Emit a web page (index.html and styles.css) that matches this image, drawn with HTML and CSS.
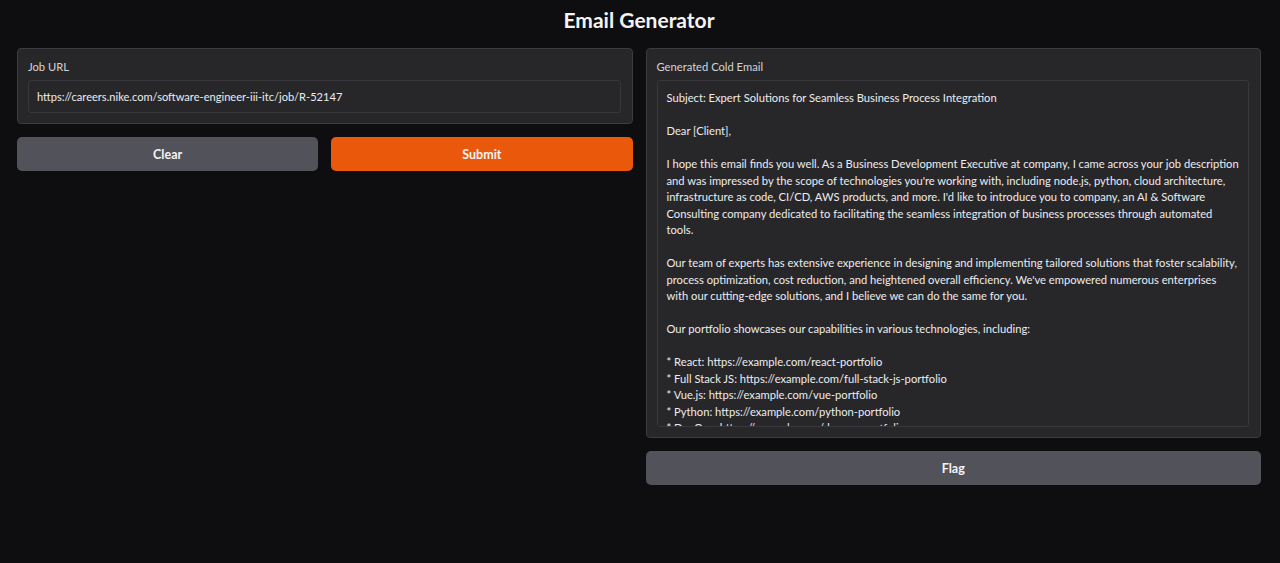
FILE: index.html
```html
<!DOCTYPE html>
<html lang="en">
<head>
<meta charset="utf-8">
<title>Email Generator</title>
<link rel="stylesheet" href="styles.css">
</head>
<body>
<main class="app">
  <h1 class="title">Email Generator</h1>
  <div class="columns">
    <section class="col">
      <div class="block">
        <label class="label">Job URL</label>
        <div class="input">https://careers.nike.com/software-engineer-iii-itc/job/R-52147</div>
      </div>
      <div class="btn-row">
        <button class="btn secondary">Clear</button>
        <button class="btn primary">Submit</button>
      </div>
    </section>
    <section class="col">
      <div class="block">
        <label class="label">Generated Cold Email</label>
        <div class="textarea">
          <div class="line">Subject: Expert Solutions for Seamless Business Process Integration</div>
          <div class="line blank"></div>
          <div class="line">Dear [Client],</div>
          <div class="line blank"></div>
          <div class="line">I hope this email finds you well. As a Business Development Executive at company, I came across your job description</div>
          <div class="line">and was impressed by the scope of technologies you're working with, including node.js, python, cloud architecture,</div>
          <div class="line">infrastructure as code, CI/CD, AWS products, and more. I'd like to introduce you to company, an AI &amp; Software</div>
          <div class="line">Consulting company dedicated to facilitating the seamless integration of business processes through automated</div>
          <div class="line">tools.</div>
          <div class="line blank"></div>
          <div class="line">Our team of experts has extensive experience in designing and implementing tailored solutions that foster scalability,</div>
          <div class="line">process optimization, cost reduction, and heightened overall efficiency. We've empowered numerous enterprises</div>
          <div class="line">with our cutting-edge solutions, and I believe we can do the same for you.</div>
          <div class="line blank"></div>
          <div class="line">Our portfolio showcases our capabilities in various technologies, including:</div>
          <div class="line blank"></div>
          <div class="line">* React: https://example.com/react-portfolio</div>
          <div class="line">* Full Stack JS: https://example.com/full-stack-js-portfolio</div>
          <div class="line">* Vue.js: https://example.com/vue-portfolio</div>
          <div class="line">* Python: https://example.com/python-portfolio</div>
          <div class="line">* DevOps: https://example.com/devops-portfolio</div>
        </div>
      </div>
      <button class="btn secondary full">Flag</button>
    </section>
  </div>
</main>
</body>
</html>
```

FILE: styles.css
```css
* { box-sizing: border-box; }
html, body {
  margin: 0;
  padding: 0;
  background: #0e0e10;
  color: #e4e4e7;
  font-family: "Source Sans Pro", Lato, "Noto Sans", sans-serif;
}
.app {
  padding: 0 19px 0 17px;
}
.title {
  margin: 0;
  height: 48px;
  padding-top: 7px;
  text-align: center;
  font-size: 21px;
  font-weight: 700;
  line-height: 26px;
  color: #f4f4f5;
}
.columns {
  display: grid;
  grid-template-columns: minmax(0, 1fr) minmax(0, 1fr);
  gap: 13px;
  align-items: start;
}
.col {
  display: flex;
  flex-direction: column;
  gap: 13px;
  min-width: 0;
}
.block {
  background: #27272a;
  border: 1px solid #3b3b40;
  border-radius: 4px;
  padding: 10px 11px 10px 10px;
}
.label {
  display: block;
  font-size: 11.2px;
  line-height: 15px;
  color: #d4d4d8;
  margin-bottom: 6px;
}
.input {
  height: 33px;
  border: 1px solid #37373c;
  border-radius: 3px;
  background: #27272a;
  padding: 0 8px;
  font-size: 11.1px;
  line-height: 31px;
  color: #ececef;
  white-space: nowrap;
  overflow: hidden;
}
.textarea {
  height: 347px;
  border: 1px solid #37373c;
  border-radius: 3px;
  background: #27272a;
  padding: 9px 9px 0 9px;
  font-size: 11.2px;
  line-height: 16.5px;
  color: #ececef;
  overflow: hidden;
}
.line {
  white-space: nowrap;
  height: 16.5px;
}
.btn-row {
  display: grid;
  grid-template-columns: minmax(0, 1fr) minmax(0, 1fr);
  gap: 13px;
}
.btn {
  height: 34px;
  border: none;
  border-radius: 5px;
  font-family: inherit;
  font-size: 12.5px;
  font-weight: 700;
  color: #f4f4f5;
  cursor: pointer;
}
.secondary { background: #52525b; }
.primary { background: #ea580c; }
.full { width: 100%; }
```
